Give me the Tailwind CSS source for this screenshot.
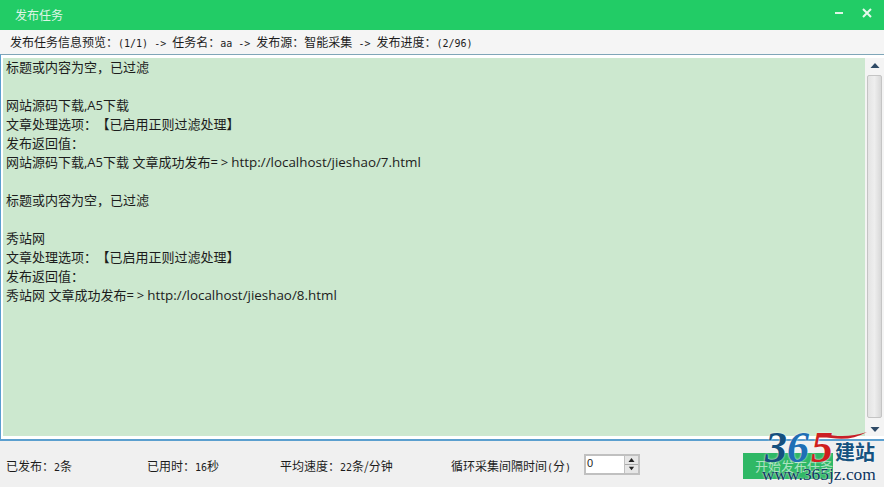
<!DOCTYPE html>
<html lang="zh-CN">
<head>
  <meta charset="UTF-8" />
  <title>发布任务</title>
  <script src="https://cdn.jsdelivr.net/npm/@tailwindcss/browser@4"></script>
</head>
<body class="relative w-[884px] h-[487px] overflow-hidden bg-[#f0f0f0] text-[#1c1c1c] font-['Noto_Sans_CJK_SC',sans-serif]">

  <!-- Title bar -->
  <header class="h-[30px] bg-[#22cc66] flex items-center justify-between pl-[15px] pr-[11px] text-[#dff5e6]">
    <h1 class="text-[12px] leading-[30px] font-normal">发布任务</h1>
    <div class="flex items-center gap-[15px] mb-[4px]">
      <svg class="w-[12px] h-[12px]" viewBox="0 0 12 12"><path d="M1 6h8" stroke="#dff5e6" stroke-width="2" fill="none"/></svg>
      <svg class="w-[12px] h-[12px]" viewBox="0 0 12 12"><path d="M2 2l8 8M10 2l-8 8" stroke="#e8faee" stroke-width="2" fill="none"/></svg>
    </div>
  </header>

  <!-- Info line -->
  <div class="h-[24px] bg-[#f5f5f5] pl-[10px] text-[12px] leading-[23px] whitespace-nowrap">
    发布任务信息预览：<span class="font-['DejaVu_Sans_Mono',monospace] text-[10px]">(1/1) -&gt; </span>任务名：<span class="font-['DejaVu_Sans_Mono',monospace] text-[10px]">aa -&gt; </span>发布源：智能采集<span class="font-['DejaVu_Sans_Mono',monospace] text-[10px]"> -&gt; </span>发布进度：<span class="font-['DejaVu_Sans_Mono',monospace] text-[10px]">(2/96)</span>
  </div>

  <!-- Log panel -->
  <div class="h-[387px] flex border-t border-b-[2px] border-l border-t-[#7fa6b8] border-b-[#5b9fcf] border-l-[#5b9fcf] bg-white pt-[3px] pb-[3px] pl-[2px]">
    <div class="w-[862px] h-[378px] bg-[#cce8cf] pl-[3px] text-[13px] leading-[19px] font-['Open_Sans','Noto_Sans_CJK_SC',sans-serif] overflow-hidden">
      <p class="h-[19px]">标题或内容为空，已过滤</p>
      <p class="h-[19px]"></p>
      <p>网站源码下载,A5下载</p>
      <p>文章处理选项：<span class="ml-[6px]">【已启用正则过滤处理】</span></p>
      <p>发布返回值：</p>
      <p>网站源码下载,A5下载 文章成功发布<span class="tracking-[3px]">=&gt;</span><span class="text-[13.4px]">http://localhost/jieshao/7.html</span></p>
      <p class="h-[19px]"></p>
      <p>标题或内容为空，已过滤</p>
      <p class="h-[19px]"></p>
      <p>秀站网</p>
      <p>文章处理选项：<span class="ml-[6px]">【已启用正则过滤处理】</span></p>
      <p>发布返回值：</p>
      <p>秀站网 文章成功发布<span class="tracking-[3px]">=&gt;</span><span class="text-[13.4px]">http://localhost/jieshao/8.html</span></p>
    </div>

    <!-- Scrollbar -->
    <div class="w-[19px] h-[378px] flex flex-col items-center bg-[#f4f4f4]">
      <svg class="w-[14px] h-[16px] shrink-0" viewBox="0 0 14 16"><path d="M7 5l4.500 5h-9z" fill="#2f4a66"/></svg>
      <div class="w-[15px] h-[343px] mt-[1px] mb-[3px] border border-[#c4c4c4] rounded-[2px] bg-linear-to-r from-[#e4e4e4] via-[#eeeeee] to-[#d8d8d8]"></div>
      <svg class="w-[14px] h-[15px] shrink-0" viewBox="0 0 14 15"><path d="M7 11l4.500 -5h-9z" fill="#2f4a66"/></svg>
    </div>
  </div>

  <!-- Status bar -->
  <footer class="h-[46px] flex items-center text-[12px] whitespace-nowrap pt-[3px]">
    <span class="ml-[6px] w-[141px]">已发布：<span class="font-['DejaVu_Sans_Mono',monospace] text-[10px]">2</span>条</span>
    <span class="w-[133px]">已用时：<span class="font-['DejaVu_Sans_Mono',monospace] text-[10px]">16</span>秒</span>
    <span class="w-[171px]">平均速度：<span class="font-['DejaVu_Sans_Mono',monospace] text-[10px]">22</span>条/分钟</span>
    <span class="w-[133px]">循环采集间隔时间<span class="font-['DejaVu_Sans_Mono',monospace] text-[10px]">(</span>分<span class="font-['DejaVu_Sans_Mono',monospace] text-[10px]">)</span></span>
    <div class="w-[56px] h-[21px] mb-[2px] flex border-[2px] border-[#c0c0c0] bg-white">
      <span class="flex-1 text-[11px] leading-[14px] pl-[1px] font-['Liberation_Sans',sans-serif]">0</span>
      <div class="w-[14px] flex flex-col bg-[#e6e6e6] border-l border-[#c0c0c0]">
        <svg class="w-[13px] h-[8px]" viewBox="0 0 13 8"><path d="M6.500 2l3 4h-6z" fill="#222"/></svg>
        <svg class="w-[13px] h-[8px] border-t border-[#aaa]" viewBox="0 0 13 8"><path d="M6.500 6l3 -4h-6z" fill="#222"/></svg>
      </div>
    </div>
    <button class="ml-[103px] w-[90px] h-[26px] bg-[#2fb866] text-white/60 text-[13px] text-left pl-[12px]">开始发布任务</button>
  </footer>

  <!-- Watermark -->
  <div class="absolute left-[762px] top-[425px] w-[122px] h-[60px] [text-shadow:0_0_2px_#fff]">
    <span class="absolute left-[3px] top-[1px] text-[44px] leading-[44px] italic font-bold font-['Liberation_Serif',serif] text-[#15507f]">3</span>
    <span class="absolute left-[25px] top-[1px] text-[44px] leading-[44px] italic font-bold font-['Liberation_Serif',serif] text-[#1f6fb5]">6</span>
    <span class="absolute left-[49px] top-[1px] text-[44px] leading-[44px] italic font-bold font-['Liberation_Serif',serif] text-[#cf1f1f]">5</span>
    <svg class="absolute left-[56px] top-[4px] w-[52px] h-[14px]" viewBox="0 0 52 14"><path d="M2 6C20 12 34 11 49 3C34 8 20 8 6 5z" fill="#c81e28"/></svg>
    <span class="absolute left-[73px] top-[17px] text-[20px] leading-[20px] font-bold text-[#15527f]">建站</span>
    <span class="absolute left-0 top-[39px] text-[17.4px] leading-[20px] font-['Liberation_Serif',serif] text-[#0f3560] whitespace-nowrap">www.365jz.com</span>
  </div>
</body>
</html>
